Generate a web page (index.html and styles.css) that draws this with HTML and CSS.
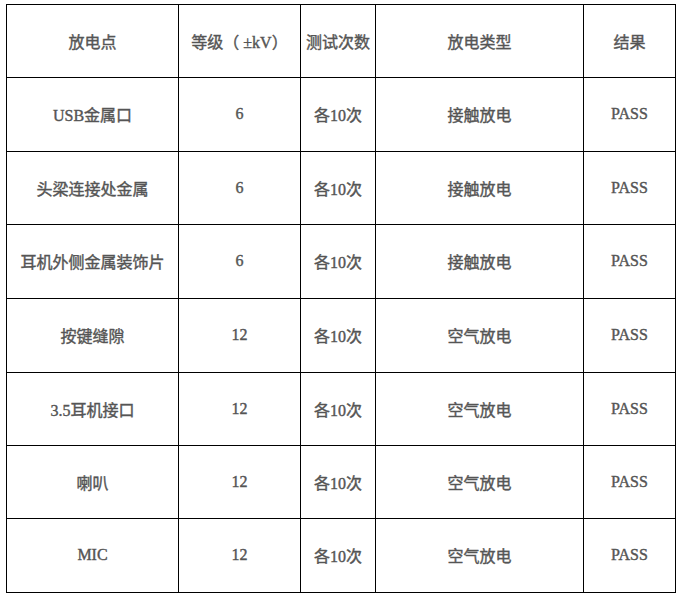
FILE: index.html
```html
<!DOCTYPE html>
<html lang="zh-CN">
<head>
<meta charset="utf-8">
<title>ESD 测试</title>
<link rel="stylesheet" href="styles.css">
</head>
<body>
<table class="esd">
  <colgroup>
    <col class="c1"><col class="c2"><col class="c3"><col class="c4"><col class="c5">
  </colgroup>
  <tr class="r-odd"><td>放电点</td><td>等级（ ±kV）</td><td>测试次数</td><td>放电类型</td><td>结果</td></tr>
  <tr class="r-even"><td>USB金属口</td><td>6</td><td>各10次</td><td>接触放电</td><td>PASS</td></tr>
  <tr class="r-odd"><td>头梁连接处金属</td><td>6</td><td>各10次</td><td>接触放电</td><td>PASS</td></tr>
  <tr class="r-even"><td>耳机外侧金属装饰片</td><td>6</td><td>各10次</td><td>接触放电</td><td>PASS</td></tr>
  <tr class="r-even"><td>按键缝隙</td><td>12</td><td>各10次</td><td>空气放电</td><td>PASS</td></tr>
  <tr class="r-odd"><td>3.5耳机接口</td><td>12</td><td>各10次</td><td>空气放电</td><td>PASS</td></tr>
  <tr class="r-odd"><td>喇叭</td><td>12</td><td>各10次</td><td>空气放电</td><td>PASS</td></tr>
  <tr class="r-even"><td>MIC</td><td>12</td><td>各10次</td><td>空气放电</td><td>PASS</td></tr>
</table>
</body>
</html>
```
FILE: styles.css
```css
html, body {
  margin: 0;
  padding: 0;
  background: #ffffff;
}
body {
  padding: 4px 0 0 6px;
}
.esd {
  border-collapse: collapse;
  table-layout: fixed;
  width: 669px;
  font-family: "Liberation Serif", "Noto Sans CJK SC", serif;
  font-size: 16px;
  font-weight: 400;
  color: #555555;
}
.esd td {
  border: 1px solid #000000;
  text-align: center;
  vertical-align: middle;
  padding: 0 0 1px 0;
  white-space: nowrap;
  -webkit-text-stroke: 0.4px #555555;
}
.c1 { width: 172px; }
.c2 { width: 122px; }
.c3 { width: 75px; }
.c4 { width: 208px; }
.c5 { width: 92px; }
.r-odd { height: 73px; }
.r-even { height: 74px; }
```
